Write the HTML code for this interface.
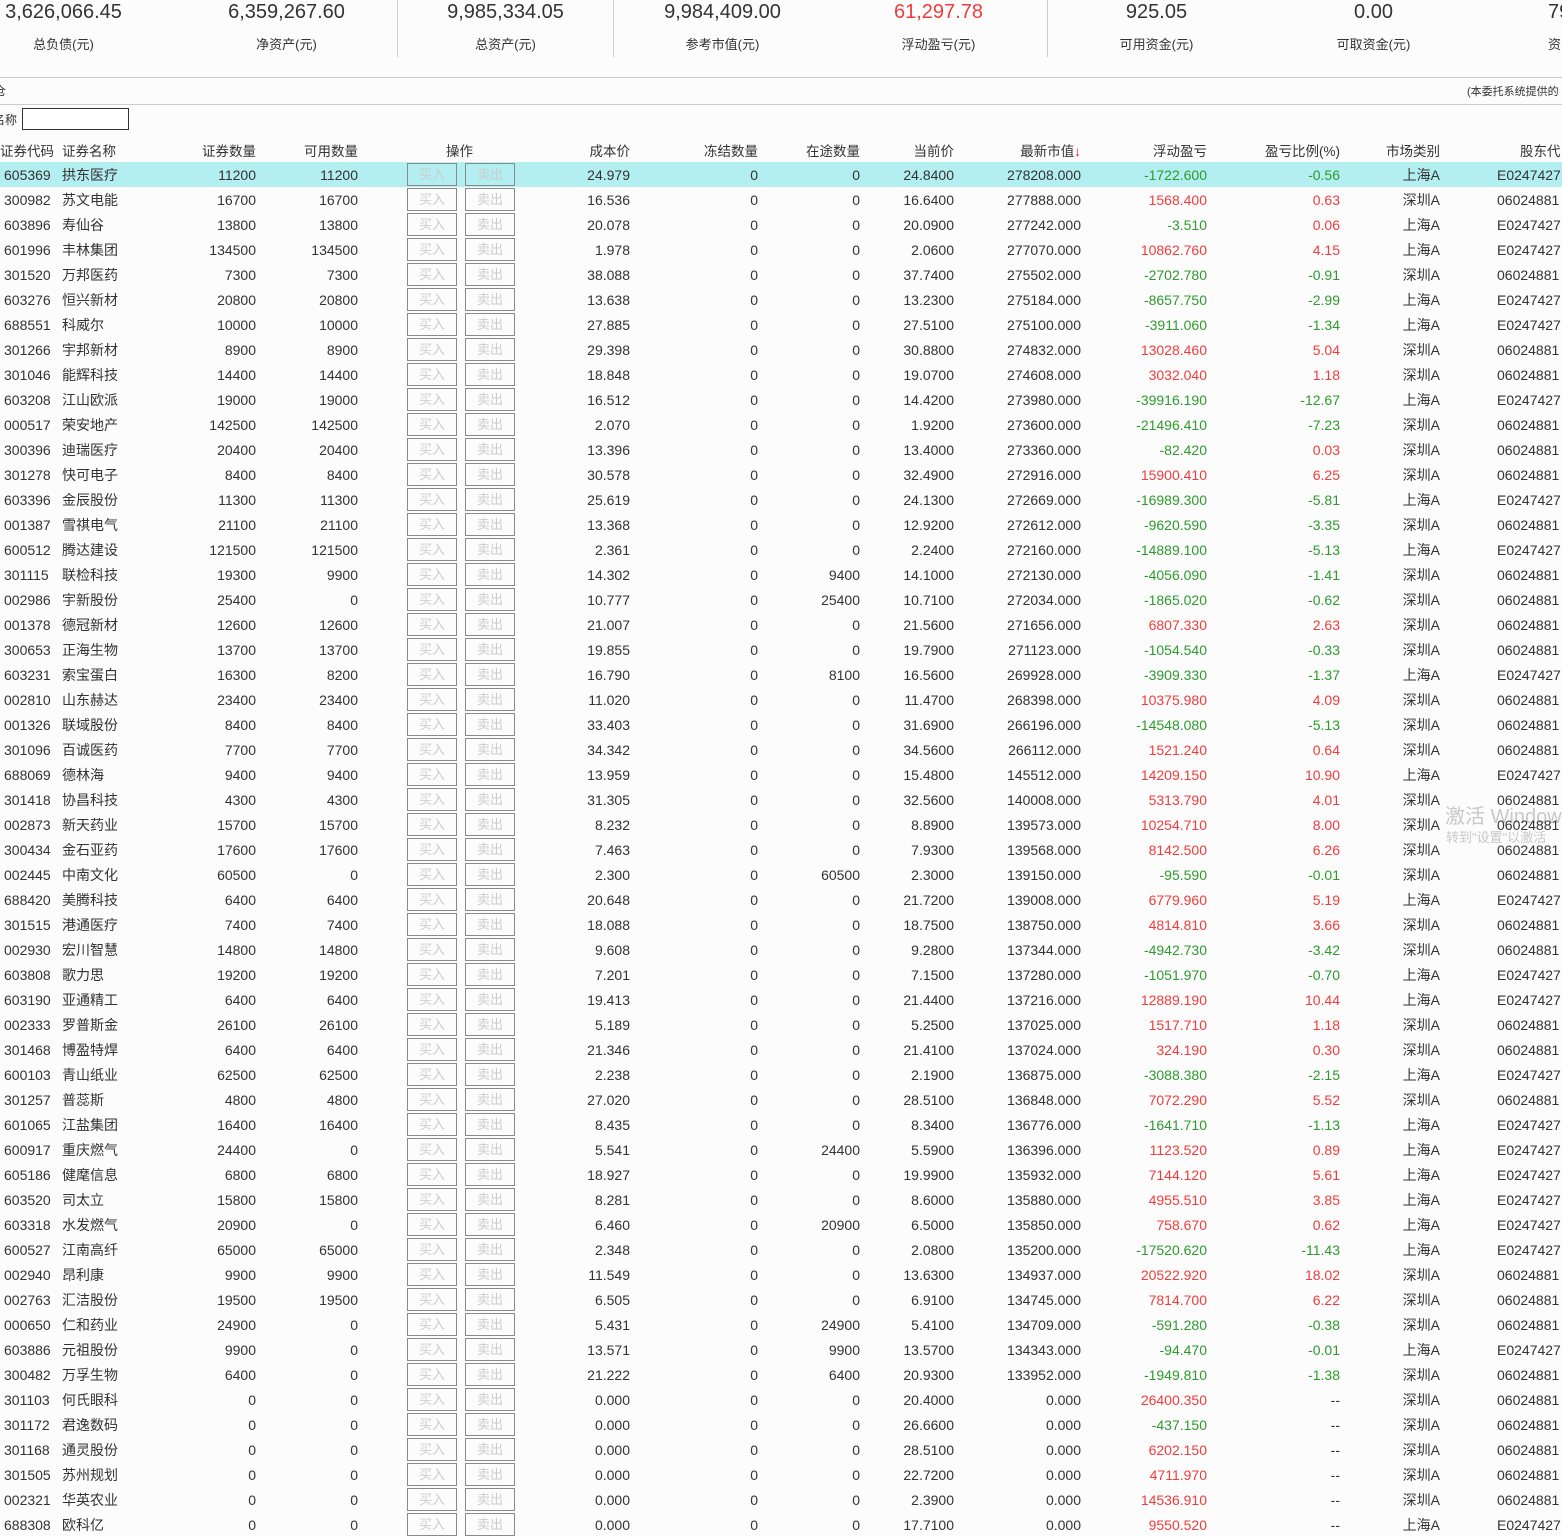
<!DOCTYPE html>
<html><head><meta charset="utf-8">
<style>
*{margin:0;padding:0;box-sizing:border-box}
body{width:1562px;height:1535px;overflow:hidden;background:#fcfcfc;font-family:"Liberation Sans","Noto Sans CJK SC",sans-serif;color:#333;position:relative}
.v{position:absolute;top:1px;width:217px;text-align:center;font-size:20px;color:#333;white-space:nowrap}
.l{position:absolute;top:34px;width:217px;text-align:center;font-size:13px;color:#333;white-space:nowrap}
.sep{position:absolute;top:0;width:1px;height:57px;background:#ccc}
.hl{position:absolute;left:0;width:1562px;height:1px;background:#ccc}
table{position:absolute;left:0;top:137px;border-collapse:collapse;table-layout:fixed;width:1562px;font-size:14px}
td{height:25px;padding:0;white-space:nowrap;overflow:hidden;text-align:right}
td:nth-child(1){text-align:left;padding-left:4px}
td:nth-child(2){text-align:left;padding-left:0}
td:nth-child(5){text-align:left;padding-left:49px}
td:nth-child(14){text-align:left;padding-left:57px}
tr.h td{height:25px;font-size:13.5px}
tr.h td:nth-child(1){padding-left:0}
tr.h td:nth-child(5){text-align:left;padding-left:88px}
tr.h td:nth-child(14){padding-left:80px}
tr.s td{background:#b3eef0}
b,i{display:inline-block;width:50px;height:23px;border:1px solid #8a8a8a;color:#ccc;font-weight:normal;font-style:normal;text-align:center;line-height:21px;font-size:13px;vertical-align:middle}
i{margin-left:8px}
.g{color:#2e9a2e}.r{color:#f03c3c}
</style></head><body>
<div class="v" style="left:-45px">3,626,066.45</div><div class="l" style="left:-45px">总负债(元)</div>
<div class="v" style="left:178px">6,359,267.60</div><div class="l" style="left:178px">净资产(元)</div>
<div class="v" style="left:397px">9,985,334.05</div><div class="l" style="left:397px">总资产(元)</div>
<div class="v" style="left:614px">9,984,409.00</div><div class="l" style="left:614px">参考市值(元)</div>
<div class="v r" style="left:830px;color:#f03c3c">61,297.78</div><div class="l" style="left:830px">浮动盈亏(元)</div>
<div class="v" style="left:1048px">925.05</div><div class="l" style="left:1048px">可用资金(元)</div>
<div class="v" style="left:1265px">0.00</div><div class="l" style="left:1265px">可取资金(元)</div>
<div class="v" style="left:1548px;width:40px;text-align:left">79</div><div class="l" style="left:1548px;width:40px;text-align:left">资</div>
<div class="sep" style="left:397px"></div><div class="sep" style="left:613px"></div><div class="sep" style="left:1047px"></div>
<div class="hl" style="top:77px"></div><div class="hl" style="top:104px"></div>
<div style="position:absolute;left:-6px;top:82px;font-size:12px">仓</div>
<div style="position:absolute;left:1467px;top:83px;font-size:11px;white-space:nowrap">(本委托系统提供的</div>
<div style="position:absolute;left:-7px;top:111px;font-size:12px">名称</div>
<div style="position:absolute;left:22px;top:108px;width:107px;height:22px;border:1px solid #333;background:#fff"></div>
<div style="position:absolute;left:1445px;top:800px;font-size:20px;color:#c8c8c8;white-space:nowrap">激活 Windows</div>
<div style="position:absolute;left:1446px;top:827px;font-size:13px;color:#c8c8c8;white-space:nowrap">转到"设置"以激活</div>
<table>
<colgroup><col style="width:62px"><col style="width:78px"><col style="width:116px"><col style="width:102px"><col style="width:162px"><col style="width:110px"><col style="width:128px"><col style="width:102px"><col style="width:94px"><col style="width:127px"><col style="width:126px"><col style="width:133px"><col style="width:100px"><col style="width:122px"></colgroup>
<tr class="h"><td>证券代码</td><td>证券名称</td><td>证券数量</td><td>可用数量</td><td>操作</td><td>成本价</td><td>冻结数量</td><td>在途数量</td><td>当前价</td><td>最新市值<span style="color:#f00">↓</span></td><td>浮动盈亏</td><td>盈亏比例(%)</td><td>市场类别</td><td>股东代</td></tr>
<tr class="s"><td>605369</td><td>拱东医疗</td><td>11200</td><td>11200</td><td><b>买入</b><i>卖出</i></td><td>24.979</td><td>0</td><td>0</td><td>24.8400</td><td>278208.000</td><td class="g">-1722.600</td><td class="g">-0.56</td><td>上海A</td><td>E0247427</td></tr>
<tr><td>300982</td><td>苏文电能</td><td>16700</td><td>16700</td><td><b>买入</b><i>卖出</i></td><td>16.536</td><td>0</td><td>0</td><td>16.6400</td><td>277888.000</td><td class="r">1568.400</td><td class="r">0.63</td><td>深圳A</td><td>06024881</td></tr>
<tr><td>603896</td><td>寿仙谷</td><td>13800</td><td>13800</td><td><b>买入</b><i>卖出</i></td><td>20.078</td><td>0</td><td>0</td><td>20.0900</td><td>277242.000</td><td class="g">-3.510</td><td class="r">0.06</td><td>上海A</td><td>E0247427</td></tr>
<tr><td>601996</td><td>丰林集团</td><td>134500</td><td>134500</td><td><b>买入</b><i>卖出</i></td><td>1.978</td><td>0</td><td>0</td><td>2.0600</td><td>277070.000</td><td class="r">10862.760</td><td class="r">4.15</td><td>上海A</td><td>E0247427</td></tr>
<tr><td>301520</td><td>万邦医药</td><td>7300</td><td>7300</td><td><b>买入</b><i>卖出</i></td><td>38.088</td><td>0</td><td>0</td><td>37.7400</td><td>275502.000</td><td class="g">-2702.780</td><td class="g">-0.91</td><td>深圳A</td><td>06024881</td></tr>
<tr><td>603276</td><td>恒兴新材</td><td>20800</td><td>20800</td><td><b>买入</b><i>卖出</i></td><td>13.638</td><td>0</td><td>0</td><td>13.2300</td><td>275184.000</td><td class="g">-8657.750</td><td class="g">-2.99</td><td>上海A</td><td>E0247427</td></tr>
<tr><td>688551</td><td>科威尔</td><td>10000</td><td>10000</td><td><b>买入</b><i>卖出</i></td><td>27.885</td><td>0</td><td>0</td><td>27.5100</td><td>275100.000</td><td class="g">-3911.060</td><td class="g">-1.34</td><td>上海A</td><td>E0247427</td></tr>
<tr><td>301266</td><td>宇邦新材</td><td>8900</td><td>8900</td><td><b>买入</b><i>卖出</i></td><td>29.398</td><td>0</td><td>0</td><td>30.8800</td><td>274832.000</td><td class="r">13028.460</td><td class="r">5.04</td><td>深圳A</td><td>06024881</td></tr>
<tr><td>301046</td><td>能辉科技</td><td>14400</td><td>14400</td><td><b>买入</b><i>卖出</i></td><td>18.848</td><td>0</td><td>0</td><td>19.0700</td><td>274608.000</td><td class="r">3032.040</td><td class="r">1.18</td><td>深圳A</td><td>06024881</td></tr>
<tr><td>603208</td><td>江山欧派</td><td>19000</td><td>19000</td><td><b>买入</b><i>卖出</i></td><td>16.512</td><td>0</td><td>0</td><td>14.4200</td><td>273980.000</td><td class="g">-39916.190</td><td class="g">-12.67</td><td>上海A</td><td>E0247427</td></tr>
<tr><td>000517</td><td>荣安地产</td><td>142500</td><td>142500</td><td><b>买入</b><i>卖出</i></td><td>2.070</td><td>0</td><td>0</td><td>1.9200</td><td>273600.000</td><td class="g">-21496.410</td><td class="g">-7.23</td><td>深圳A</td><td>06024881</td></tr>
<tr><td>300396</td><td>迪瑞医疗</td><td>20400</td><td>20400</td><td><b>买入</b><i>卖出</i></td><td>13.396</td><td>0</td><td>0</td><td>13.4000</td><td>273360.000</td><td class="g">-82.420</td><td class="r">0.03</td><td>深圳A</td><td>06024881</td></tr>
<tr><td>301278</td><td>快可电子</td><td>8400</td><td>8400</td><td><b>买入</b><i>卖出</i></td><td>30.578</td><td>0</td><td>0</td><td>32.4900</td><td>272916.000</td><td class="r">15900.410</td><td class="r">6.25</td><td>深圳A</td><td>06024881</td></tr>
<tr><td>603396</td><td>金辰股份</td><td>11300</td><td>11300</td><td><b>买入</b><i>卖出</i></td><td>25.619</td><td>0</td><td>0</td><td>24.1300</td><td>272669.000</td><td class="g">-16989.300</td><td class="g">-5.81</td><td>上海A</td><td>E0247427</td></tr>
<tr><td>001387</td><td>雪祺电气</td><td>21100</td><td>21100</td><td><b>买入</b><i>卖出</i></td><td>13.368</td><td>0</td><td>0</td><td>12.9200</td><td>272612.000</td><td class="g">-9620.590</td><td class="g">-3.35</td><td>深圳A</td><td>06024881</td></tr>
<tr><td>600512</td><td>腾达建设</td><td>121500</td><td>121500</td><td><b>买入</b><i>卖出</i></td><td>2.361</td><td>0</td><td>0</td><td>2.2400</td><td>272160.000</td><td class="g">-14889.100</td><td class="g">-5.13</td><td>上海A</td><td>E0247427</td></tr>
<tr><td>301115</td><td>联检科技</td><td>19300</td><td>9900</td><td><b>买入</b><i>卖出</i></td><td>14.302</td><td>0</td><td>9400</td><td>14.1000</td><td>272130.000</td><td class="g">-4056.090</td><td class="g">-1.41</td><td>深圳A</td><td>06024881</td></tr>
<tr><td>002986</td><td>宇新股份</td><td>25400</td><td>0</td><td><b>买入</b><i>卖出</i></td><td>10.777</td><td>0</td><td>25400</td><td>10.7100</td><td>272034.000</td><td class="g">-1865.020</td><td class="g">-0.62</td><td>深圳A</td><td>06024881</td></tr>
<tr><td>001378</td><td>德冠新材</td><td>12600</td><td>12600</td><td><b>买入</b><i>卖出</i></td><td>21.007</td><td>0</td><td>0</td><td>21.5600</td><td>271656.000</td><td class="r">6807.330</td><td class="r">2.63</td><td>深圳A</td><td>06024881</td></tr>
<tr><td>300653</td><td>正海生物</td><td>13700</td><td>13700</td><td><b>买入</b><i>卖出</i></td><td>19.855</td><td>0</td><td>0</td><td>19.7900</td><td>271123.000</td><td class="g">-1054.540</td><td class="g">-0.33</td><td>深圳A</td><td>06024881</td></tr>
<tr><td>603231</td><td>索宝蛋白</td><td>16300</td><td>8200</td><td><b>买入</b><i>卖出</i></td><td>16.790</td><td>0</td><td>8100</td><td>16.5600</td><td>269928.000</td><td class="g">-3909.330</td><td class="g">-1.37</td><td>上海A</td><td>E0247427</td></tr>
<tr><td>002810</td><td>山东赫达</td><td>23400</td><td>23400</td><td><b>买入</b><i>卖出</i></td><td>11.020</td><td>0</td><td>0</td><td>11.4700</td><td>268398.000</td><td class="r">10375.980</td><td class="r">4.09</td><td>深圳A</td><td>06024881</td></tr>
<tr><td>001326</td><td>联域股份</td><td>8400</td><td>8400</td><td><b>买入</b><i>卖出</i></td><td>33.403</td><td>0</td><td>0</td><td>31.6900</td><td>266196.000</td><td class="g">-14548.080</td><td class="g">-5.13</td><td>深圳A</td><td>06024881</td></tr>
<tr><td>301096</td><td>百诚医药</td><td>7700</td><td>7700</td><td><b>买入</b><i>卖出</i></td><td>34.342</td><td>0</td><td>0</td><td>34.5600</td><td>266112.000</td><td class="r">1521.240</td><td class="r">0.64</td><td>深圳A</td><td>06024881</td></tr>
<tr><td>688069</td><td>德林海</td><td>9400</td><td>9400</td><td><b>买入</b><i>卖出</i></td><td>13.959</td><td>0</td><td>0</td><td>15.4800</td><td>145512.000</td><td class="r">14209.150</td><td class="r">10.90</td><td>上海A</td><td>E0247427</td></tr>
<tr><td>301418</td><td>协昌科技</td><td>4300</td><td>4300</td><td><b>买入</b><i>卖出</i></td><td>31.305</td><td>0</td><td>0</td><td>32.5600</td><td>140008.000</td><td class="r">5313.790</td><td class="r">4.01</td><td>深圳A</td><td>06024881</td></tr>
<tr><td>002873</td><td>新天药业</td><td>15700</td><td>15700</td><td><b>买入</b><i>卖出</i></td><td>8.232</td><td>0</td><td>0</td><td>8.8900</td><td>139573.000</td><td class="r">10254.710</td><td class="r">8.00</td><td>深圳A</td><td>06024881</td></tr>
<tr><td>300434</td><td>金石亚药</td><td>17600</td><td>17600</td><td><b>买入</b><i>卖出</i></td><td>7.463</td><td>0</td><td>0</td><td>7.9300</td><td>139568.000</td><td class="r">8142.500</td><td class="r">6.26</td><td>深圳A</td><td>06024881</td></tr>
<tr><td>002445</td><td>中南文化</td><td>60500</td><td>0</td><td><b>买入</b><i>卖出</i></td><td>2.300</td><td>0</td><td>60500</td><td>2.3000</td><td>139150.000</td><td class="g">-95.590</td><td class="g">-0.01</td><td>深圳A</td><td>06024881</td></tr>
<tr><td>688420</td><td>美腾科技</td><td>6400</td><td>6400</td><td><b>买入</b><i>卖出</i></td><td>20.648</td><td>0</td><td>0</td><td>21.7200</td><td>139008.000</td><td class="r">6779.960</td><td class="r">5.19</td><td>上海A</td><td>E0247427</td></tr>
<tr><td>301515</td><td>港通医疗</td><td>7400</td><td>7400</td><td><b>买入</b><i>卖出</i></td><td>18.088</td><td>0</td><td>0</td><td>18.7500</td><td>138750.000</td><td class="r">4814.810</td><td class="r">3.66</td><td>深圳A</td><td>06024881</td></tr>
<tr><td>002930</td><td>宏川智慧</td><td>14800</td><td>14800</td><td><b>买入</b><i>卖出</i></td><td>9.608</td><td>0</td><td>0</td><td>9.2800</td><td>137344.000</td><td class="g">-4942.730</td><td class="g">-3.42</td><td>深圳A</td><td>06024881</td></tr>
<tr><td>603808</td><td>歌力思</td><td>19200</td><td>19200</td><td><b>买入</b><i>卖出</i></td><td>7.201</td><td>0</td><td>0</td><td>7.1500</td><td>137280.000</td><td class="g">-1051.970</td><td class="g">-0.70</td><td>上海A</td><td>E0247427</td></tr>
<tr><td>603190</td><td>亚通精工</td><td>6400</td><td>6400</td><td><b>买入</b><i>卖出</i></td><td>19.413</td><td>0</td><td>0</td><td>21.4400</td><td>137216.000</td><td class="r">12889.190</td><td class="r">10.44</td><td>上海A</td><td>E0247427</td></tr>
<tr><td>002333</td><td>罗普斯金</td><td>26100</td><td>26100</td><td><b>买入</b><i>卖出</i></td><td>5.189</td><td>0</td><td>0</td><td>5.2500</td><td>137025.000</td><td class="r">1517.710</td><td class="r">1.18</td><td>深圳A</td><td>06024881</td></tr>
<tr><td>301468</td><td>博盈特焊</td><td>6400</td><td>6400</td><td><b>买入</b><i>卖出</i></td><td>21.346</td><td>0</td><td>0</td><td>21.4100</td><td>137024.000</td><td class="r">324.190</td><td class="r">0.30</td><td>深圳A</td><td>06024881</td></tr>
<tr><td>600103</td><td>青山纸业</td><td>62500</td><td>62500</td><td><b>买入</b><i>卖出</i></td><td>2.238</td><td>0</td><td>0</td><td>2.1900</td><td>136875.000</td><td class="g">-3088.380</td><td class="g">-2.15</td><td>上海A</td><td>E0247427</td></tr>
<tr><td>301257</td><td>普蕊斯</td><td>4800</td><td>4800</td><td><b>买入</b><i>卖出</i></td><td>27.020</td><td>0</td><td>0</td><td>28.5100</td><td>136848.000</td><td class="r">7072.290</td><td class="r">5.52</td><td>深圳A</td><td>06024881</td></tr>
<tr><td>601065</td><td>江盐集团</td><td>16400</td><td>16400</td><td><b>买入</b><i>卖出</i></td><td>8.435</td><td>0</td><td>0</td><td>8.3400</td><td>136776.000</td><td class="g">-1641.710</td><td class="g">-1.13</td><td>上海A</td><td>E0247427</td></tr>
<tr><td>600917</td><td>重庆燃气</td><td>24400</td><td>0</td><td><b>买入</b><i>卖出</i></td><td>5.541</td><td>0</td><td>24400</td><td>5.5900</td><td>136396.000</td><td class="r">1123.520</td><td class="r">0.89</td><td>上海A</td><td>E0247427</td></tr>
<tr><td>605186</td><td>健麾信息</td><td>6800</td><td>6800</td><td><b>买入</b><i>卖出</i></td><td>18.927</td><td>0</td><td>0</td><td>19.9900</td><td>135932.000</td><td class="r">7144.120</td><td class="r">5.61</td><td>上海A</td><td>E0247427</td></tr>
<tr><td>603520</td><td>司太立</td><td>15800</td><td>15800</td><td><b>买入</b><i>卖出</i></td><td>8.281</td><td>0</td><td>0</td><td>8.6000</td><td>135880.000</td><td class="r">4955.510</td><td class="r">3.85</td><td>上海A</td><td>E0247427</td></tr>
<tr><td>603318</td><td>水发燃气</td><td>20900</td><td>0</td><td><b>买入</b><i>卖出</i></td><td>6.460</td><td>0</td><td>20900</td><td>6.5000</td><td>135850.000</td><td class="r">758.670</td><td class="r">0.62</td><td>上海A</td><td>E0247427</td></tr>
<tr><td>600527</td><td>江南高纤</td><td>65000</td><td>65000</td><td><b>买入</b><i>卖出</i></td><td>2.348</td><td>0</td><td>0</td><td>2.0800</td><td>135200.000</td><td class="g">-17520.620</td><td class="g">-11.43</td><td>上海A</td><td>E0247427</td></tr>
<tr><td>002940</td><td>昂利康</td><td>9900</td><td>9900</td><td><b>买入</b><i>卖出</i></td><td>11.549</td><td>0</td><td>0</td><td>13.6300</td><td>134937.000</td><td class="r">20522.920</td><td class="r">18.02</td><td>深圳A</td><td>06024881</td></tr>
<tr><td>002763</td><td>汇洁股份</td><td>19500</td><td>19500</td><td><b>买入</b><i>卖出</i></td><td>6.505</td><td>0</td><td>0</td><td>6.9100</td><td>134745.000</td><td class="r">7814.700</td><td class="r">6.22</td><td>深圳A</td><td>06024881</td></tr>
<tr><td>000650</td><td>仁和药业</td><td>24900</td><td>0</td><td><b>买入</b><i>卖出</i></td><td>5.431</td><td>0</td><td>24900</td><td>5.4100</td><td>134709.000</td><td class="g">-591.280</td><td class="g">-0.38</td><td>深圳A</td><td>06024881</td></tr>
<tr><td>603886</td><td>元祖股份</td><td>9900</td><td>0</td><td><b>买入</b><i>卖出</i></td><td>13.571</td><td>0</td><td>9900</td><td>13.5700</td><td>134343.000</td><td class="g">-94.470</td><td class="g">-0.01</td><td>上海A</td><td>E0247427</td></tr>
<tr><td>300482</td><td>万孚生物</td><td>6400</td><td>0</td><td><b>买入</b><i>卖出</i></td><td>21.222</td><td>0</td><td>6400</td><td>20.9300</td><td>133952.000</td><td class="g">-1949.810</td><td class="g">-1.38</td><td>深圳A</td><td>06024881</td></tr>
<tr><td>301103</td><td>何氏眼科</td><td>0</td><td>0</td><td><b>买入</b><i>卖出</i></td><td>0.000</td><td>0</td><td>0</td><td>20.4000</td><td>0.000</td><td class="r">26400.350</td><td>--</td><td>深圳A</td><td>06024881</td></tr>
<tr><td>301172</td><td>君逸数码</td><td>0</td><td>0</td><td><b>买入</b><i>卖出</i></td><td>0.000</td><td>0</td><td>0</td><td>26.6600</td><td>0.000</td><td class="g">-437.150</td><td>--</td><td>深圳A</td><td>06024881</td></tr>
<tr><td>301168</td><td>通灵股份</td><td>0</td><td>0</td><td><b>买入</b><i>卖出</i></td><td>0.000</td><td>0</td><td>0</td><td>28.5100</td><td>0.000</td><td class="r">6202.150</td><td>--</td><td>深圳A</td><td>06024881</td></tr>
<tr><td>301505</td><td>苏州规划</td><td>0</td><td>0</td><td><b>买入</b><i>卖出</i></td><td>0.000</td><td>0</td><td>0</td><td>22.7200</td><td>0.000</td><td class="r">4711.970</td><td>--</td><td>深圳A</td><td>06024881</td></tr>
<tr><td>002321</td><td>华英农业</td><td>0</td><td>0</td><td><b>买入</b><i>卖出</i></td><td>0.000</td><td>0</td><td>0</td><td>2.3900</td><td>0.000</td><td class="r">14536.910</td><td>--</td><td>深圳A</td><td>06024881</td></tr>
<tr><td>688308</td><td>欧科亿</td><td>0</td><td>0</td><td><b>买入</b><i>卖出</i></td><td>0.000</td><td>0</td><td>0</td><td>17.7100</td><td>0.000</td><td class="r">9550.520</td><td>--</td><td>上海A</td><td>E0247427</td></tr>
</table>
</body></html>
